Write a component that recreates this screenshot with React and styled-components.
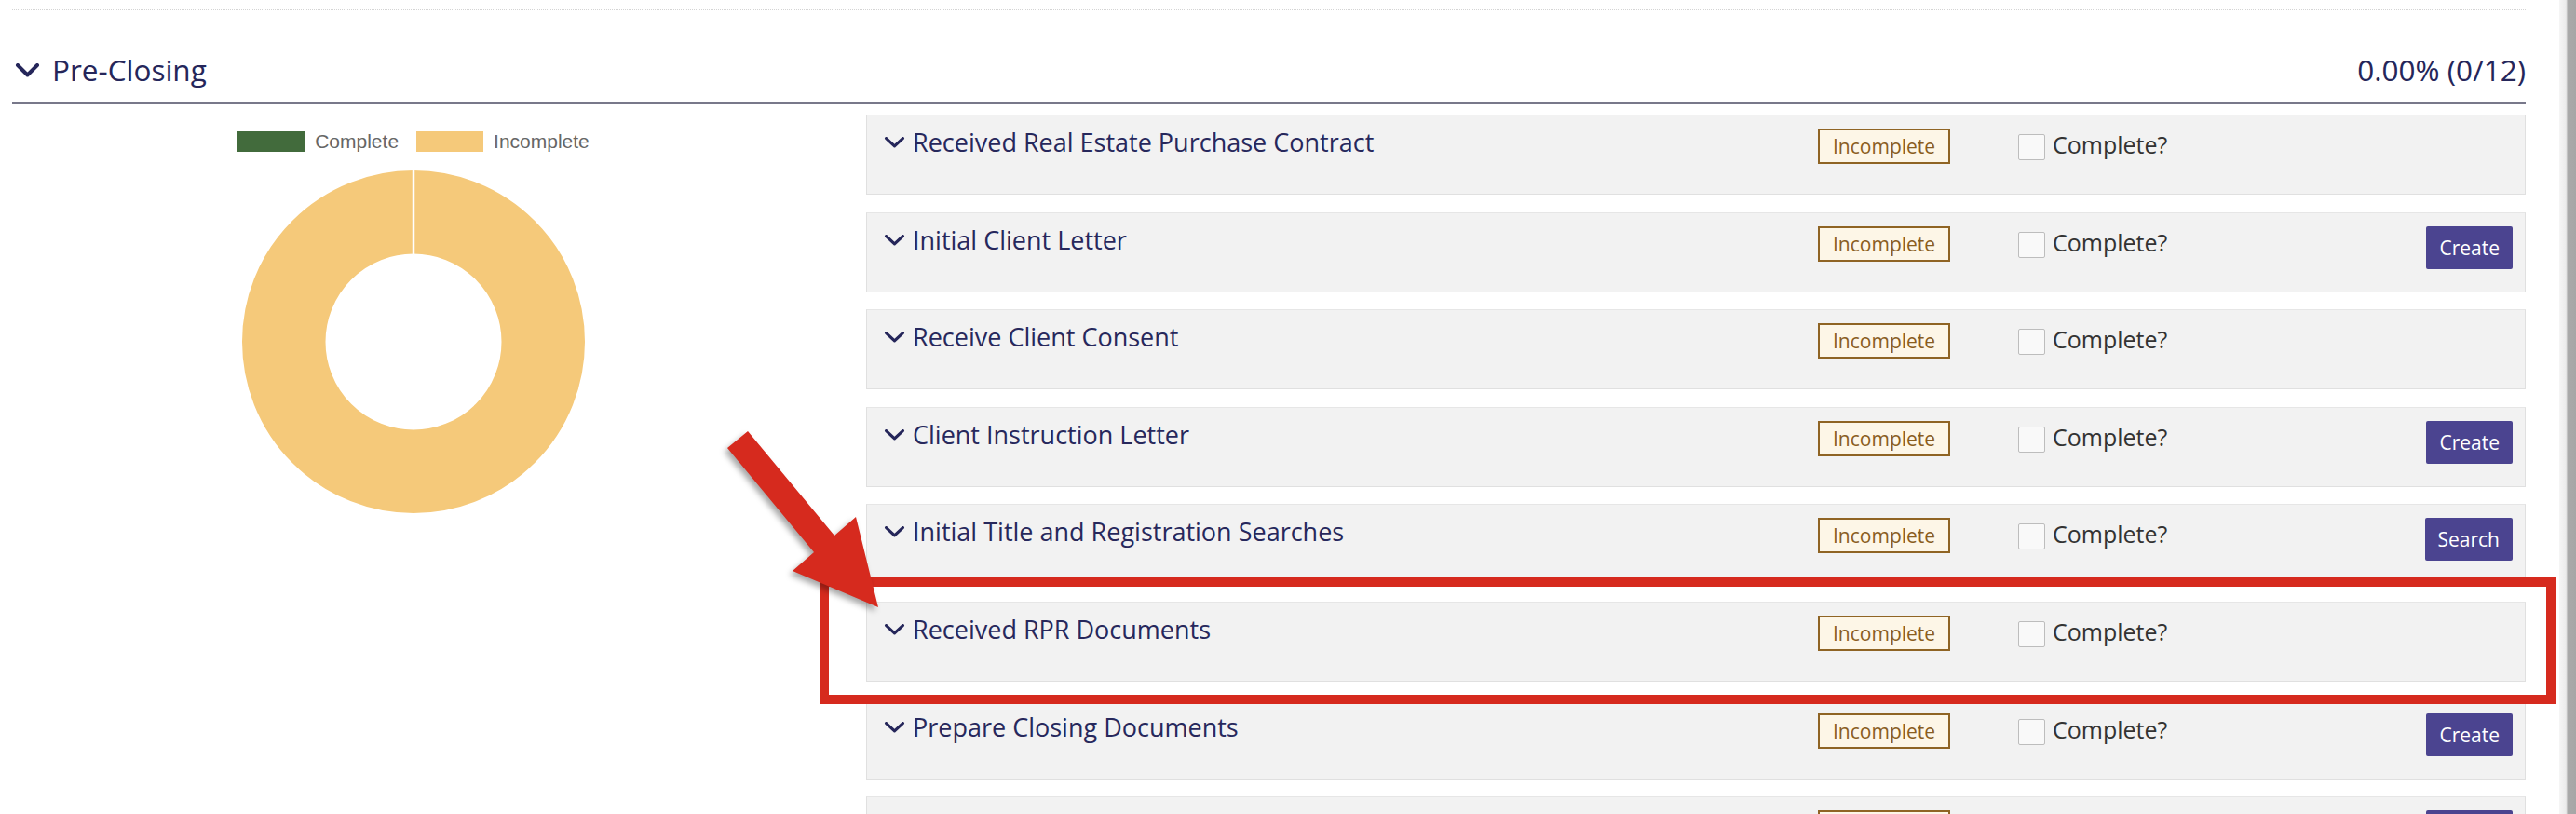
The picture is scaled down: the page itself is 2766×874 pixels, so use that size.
import React from 'react'
import styled, { createGlobalStyle } from 'styled-components'

const GlobalStyle = createGlobalStyle`
    html, body {
        margin: 0;
        padding: 0;
        background: #ffffff;
        overflow: hidden;
    }
    body {
        font-family: "Open Sans", "Liberation Sans", sans-serif;
    }
`

const tasks = [
    { title: 'Received Real Estate Purchase Contract' },
    { title: 'Initial Client Letter', action: 'Create' },
    { title: 'Receive Client Consent' },
    { title: 'Client Instruction Letter', action: 'Create' },
    { title: 'Initial Title and Registration Searches', action: 'Search' },
    { title: 'Received RPR Documents' },
    { title: 'Prepare Closing Documents', action: 'Create' },
    { title: 'Statement of Adjustments', action: 'Create' },
]

function Chevron({ size }) {
    const w = size === 'large' ? 27 : 23
    const h = size === 'large' ? 15 : 12
    const sw = size === 'large' ? 4 : 3.2
    return (
        <svg width={w} height={h} viewBox={`0 0 ${w} ${h}`}>
            <polyline
                points={`${sw / 2 + 1},${sw / 2} ${w / 2},${h - sw / 2 - 0.5} ${w - sw / 2 - 1},${sw / 2}`}
                fill="none"
                stroke="#25265a"
                strokeWidth={sw}
                strokeLinecap="round"
                strokeLinejoin="round"
            />
        </svg>
    )
}

function Donut() {
    return (
        <svg width="368" height="368" viewBox="0 0 368 368">
            <circle cx="184" cy="184" r="139.25" fill="none" stroke="#f5c97a" strokeWidth="89.5" />
            <line x1="184" y1="0" x2="184" y2="90" stroke="#ffffff" strokeWidth="2.5" />
        </svg>
    )
}

function TaskCard({ task }) {
    return (
        <Card>
            <TaskTitle>
                <Chevron />
                <span>{task.title}</span>
            </TaskTitle>
            <div>
                <Badge>Incomplete</Badge>
            </div>
            <CheckWrap>
                <Checkbox />
                <CheckLabel>Complete?</CheckLabel>
            </CheckWrap>
            <div>{task.action && <ActionButton>{task.action}</ActionButton>}</div>
        </Card>
    )
}

function App() {
    return (
        <Page>
            <GlobalStyle />
            <Main>
                <TopRule />
                <SectionHeader>
                    <HeaderTitle>
                        <Chevron size="large" />
                        <span>Pre-Closing</span>
                    </HeaderTitle>
                    <HeaderProgress>0.00% (0/12)</HeaderProgress>
                </SectionHeader>
                <Body>
                    <ChartColumn>
                        <Legend>
                            <LegendSwatch color="#426b3c" />
                            <LegendText>Complete</LegendText>
                            <LegendSwatch color="#f5c97a" $gap />
                            <LegendText>Incomplete</LegendText>
                        </Legend>
                        <Donut />
                    </ChartColumn>
                    <TaskList>
                        {tasks.map((task) => (
                            <TaskCard key={task.title} task={task} />
                        ))}
                    </TaskList>
                </Body>
            </Main>
            <ScrollEdge />

            <Highlight />
            <Arrow viewBox="0 0 200 220" width="200" height="220">
                <polygon
                    points="21,31 43,13 136,125 159,105 183,202 91,163 114,143"
                    fill="#d62a1e"
                />
            </Arrow>
        </Page>
    )
}

const Page = styled.div`
    position: relative;
    display: flex;
    width: 2766px;
    height: 874px;
    overflow: hidden;
`

const Main = styled.div`
    flex: 1;
    padding: 0 36px 0 13px;
`

const ScrollEdge = styled.div`
    width: 18px;
    flex-shrink: 0;
    background: linear-gradient(to right, #f6f6f6 0, #ececec 7px, #dcdcdc 8px, #aaaaaa 9px, #a6a6a6 100%);
`

const TopRule = styled.div`
    margin-top: 10px;
    border-top: 1px dotted #d4d4d4;
`

const SectionHeader = styled.div`
    display: flex;
    align-items: center;
    justify-content: space-between;
    padding: 42px 0 13px 3px;
    border-bottom: 2px solid #78788a;
    color: #25265a;
    font-size: 31.5px;
    line-height: 44px;
`

const HeaderTitle = styled.div`
    display: flex;
    align-items: center;
    gap: 13px;
`

const HeaderProgress = styled.div``

const Body = styled.div`
    display: grid;
    grid-template-columns: 862px 1fr;
    column-gap: 55px;
`

const ChartColumn = styled.div`
    display: flex;
    flex-direction: column;
    align-items: center;
    padding-top: 29px;
    gap: 20px;
`

const Legend = styled.div`
    display: flex;
    align-items: center;
    height: 22px;
    font-family: "Liberation Sans", Arial, sans-serif;
`

const LegendSwatch = styled.span`
    width: 72px;
    height: 22px;
    background: ${({ color }) => color};
    margin-left: ${({ $gap }) => ($gap ? '19px' : '0')};
`

const LegendText = styled.span`
    margin-left: 11px;
    font-size: 21px;
    color: #666666;
`

const TaskList = styled.div`
    display: flex;
    flex-direction: column;
    gap: 18.6px;
    padding-top: 11px;
`

const Card = styled.div`
    display: grid;
    grid-template-columns: 1003px 215px 1fr auto;
    align-items: start;
    height: 86px;
    flex-shrink: 0;
    box-sizing: border-box;
    padding: 14px 13px 0 18px;
    background: #f2f2f2;
    border: 1px solid #e0e0e0;
    border-top-color: #e6e6e6;
`

const TaskTitle = styled.div`
    display: flex;
    align-items: center;
    gap: 8px;
    font-size: 27px;
    line-height: 30px;
    color: #27285c;
    white-space: nowrap;
`

const Badge = styled.span`
    display: inline-block;
    box-sizing: border-box;
    height: 38px;
    padding: 0 14px;
    border: 2px solid #8f6424;
    background: #fdf6e7;
    color: #8a5d1e;
    font-size: 21px;
    line-height: 34px;
`

const CheckWrap = styled.div`
    display: flex;
    align-items: flex-start;
    gap: 8px;
    padding-top: 6px;
`

const Checkbox = styled.span`
    width: 29px;
    height: 28px;
    box-sizing: border-box;
    border: 1px solid #bdbdbd;
    border-radius: 2px;
    background: #f9f9f9;
`

const CheckLabel = styled.span`
    margin-top: -1px;
    font-size: 25px;
    line-height: 25px;
    color: #333333;
`

const ActionButton = styled.button`
    height: 46px;
    padding: 0 14px;
    border: none;
    border-radius: 2px;
    background: #4b4490;
    color: #ffffff;
    font-family: "Open Sans", sans-serif;
    font-size: 21px;
`

const Highlight = styled.div`
    position: absolute;
    left: 880px;
    top: 620px;
    width: 1864px;
    height: 136px;
    box-sizing: border-box;
    border: 10px solid #d62a1e;
    pointer-events: none;
`

const Arrow = styled.svg`
    position: absolute;
    left: 760px;
    top: 450px;
    overflow: visible;
    filter: drop-shadow(-3px 4px 3px rgba(0, 0, 0, 0.35));
`

export default App
